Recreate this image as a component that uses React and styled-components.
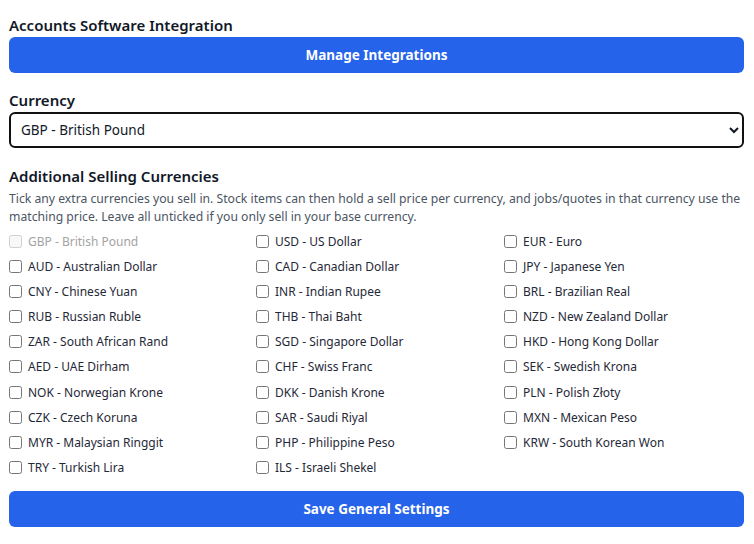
import React from "react";
import styled, { createGlobalStyle } from "styled-components";

const currencies = [
  ["GBP", "British Pound"],
  ["USD", "US Dollar"],
  ["EUR", "Euro"],
  ["AUD", "Australian Dollar"],
  ["CAD", "Canadian Dollar"],
  ["JPY", "Japanese Yen"],
  ["CNY", "Chinese Yuan"],
  ["INR", "Indian Rupee"],
  ["BRL", "Brazilian Real"],
  ["RUB", "Russian Ruble"],
  ["THB", "Thai Baht"],
  ["NZD", "New Zealand Dollar"],
  ["ZAR", "South African Rand"],
  ["SGD", "Singapore Dollar"],
  ["HKD", "Hong Kong Dollar"],
  ["AED", "UAE Dirham"],
  ["CHF", "Swiss Franc"],
  ["SEK", "Swedish Krona"],
  ["NOK", "Norwegian Krone"],
  ["DKK", "Danish Krone"],
  ["PLN", "Polish Złoty"],
  ["CZK", "Czech Koruna"],
  ["SAR", "Saudi Riyal"],
  ["MXN", "Mexican Peso"],
  ["MYR", "Malaysian Ringgit"],
  ["PHP", "Philippine Peso"],
  ["KRW", "South Korean Won"],
  ["TRY", "Turkish Lira"],
  ["ILS", "Israeli Shekel"],
];

const baseCurrency = "GBP";

const GlobalStyle = createGlobalStyle`
  body {
    margin: 0;
    background: #fff;
    font-family: "Noto Sans", "Open Sans", sans-serif;
    color: #1f2937;
  }
`;

export default function App() {
  return (
    <>
      <GlobalStyle />
      <Page>
        <Section>
          <Heading>Accounts Software Integration</Heading>
          <Button type="button">Manage Integrations</Button>
        </Section>

        <Section>
          <Heading>Currency</Heading>
          <Select defaultValue="GBP">
            {currencies.map(([code, name]) => (
              <option key={code} value={code}>
                {code} - {name}
              </option>
            ))}
          </Select>
        </Section>

        <Section $spaced>
          <Heading>Additional Selling Currencies</Heading>
          <Help>
            Tick any extra currencies you sell in. Stock items can then hold a
            sell price per currency, and jobs/quotes in that currency use the
            matching price. Leave all unticked if you only sell in your base
            currency.
          </Help>
          <CurrencyGrid>
            {currencies.map(([code, name]) => {
              const disabled = code === baseCurrency;
              return (
                <CheckLabel key={code} disabled={disabled}>
                  <Box type="checkbox" disabled={disabled} />
                  {code} - {name}
                </CheckLabel>
              );
            })}
          </CurrencyGrid>
        </Section>

        <SaveButton type="button">Save General Settings</SaveButton>
      </Page>
    </>
  );
}

const Page = styled.div`
  padding: 15px 10px 16px 9px;
  display: flex;
  flex-direction: column;
  gap: 17px;
`;

const Section = styled.div`
  display: flex;
  flex-direction: column;
  margin-top: ${(p) => (p.$spaced ? "1px" : "0")};
`;

const Heading = styled.h2`
  margin: 0 0 2px;
  font-size: 15px;
  font-weight: 600;
  line-height: 20px;
  color: #111827;
`;

const Button = styled.button`
  height: 36px;
  width: 100%;
  border: none;
  border-radius: 6px;
  background: #2563eb;
  color: #fff;
  font-family: "Noto Sans", sans-serif;
  font-size: 13.5px;
  font-weight: 700;
  cursor: pointer;
`;

const SaveButton = styled(Button)`
  margin-top: -3px;
`;

const Select = styled.select`
  height: 36px;
  width: 100%;
  border: 2px solid #111;
  border-radius: 6px;
  padding: 0 6px;
  background: #fff;
  font-family: "Noto Sans", sans-serif;
  font-size: 13.5px;
  color: #111827;
`;

const Help = styled.p`
  margin: 2px 0 6px;
  font-size: 12.2px;
  line-height: 18px;
  color: #4b5563;
`;

const CurrencyGrid = styled.div`
  display: grid;
  grid-template-columns: 247px 248px 1fr;
  row-gap: 7.2px;
`;

const CheckLabel = styled.label`
  display: flex;
  align-items: center;
  gap: 6px;
  height: 18px;
  font-size: 12px;
  color: ${(p) => (p.disabled ? "#a3a3a3" : "#1f2937")};
`;

const Box = styled.input`
  margin: 0;
  width: 13px;
  height: 13px;
`;
